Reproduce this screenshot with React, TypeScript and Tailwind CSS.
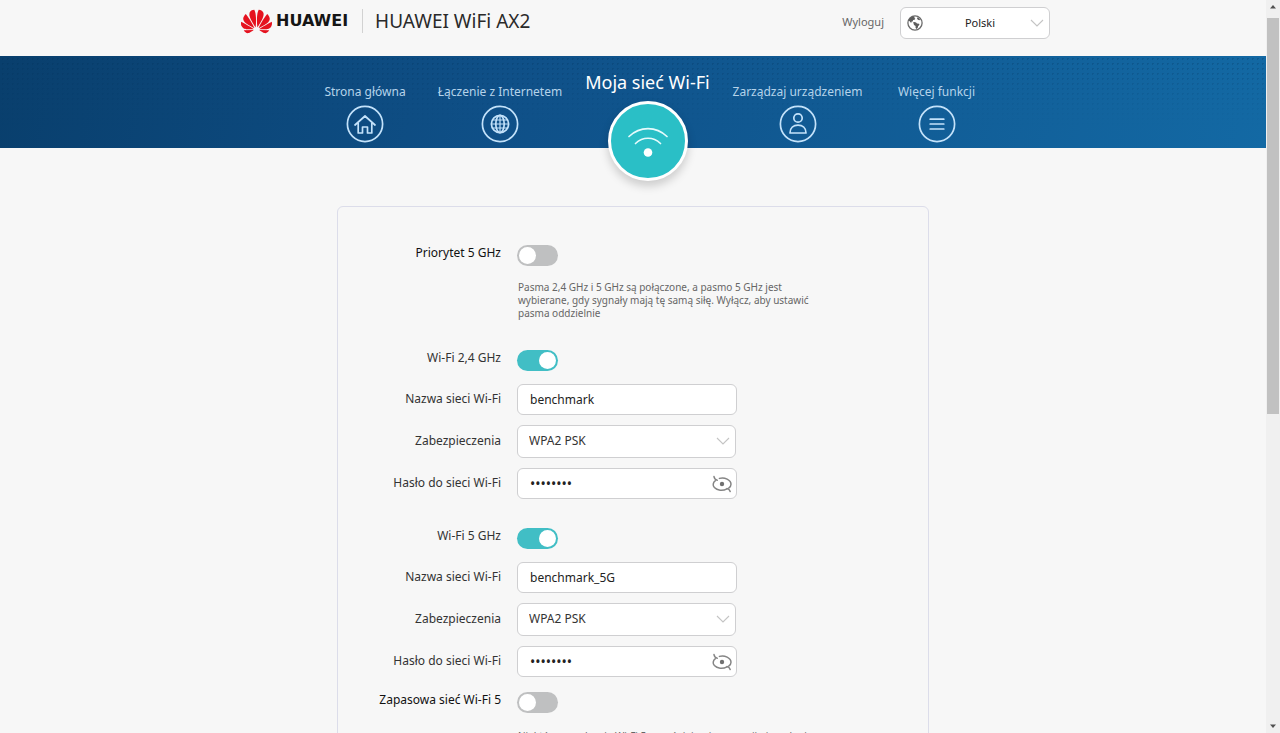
import { useState, type ReactNode } from "react";
import { SiHuawei } from "react-icons/si";

const FONT = "font-['Segoe_UI','Noto_Sans',sans-serif]";

function Chevron({ className }: { className: string }) {
  return (
    <svg viewBox="0 0 14 8" className={className} fill="none" stroke="#c4c4c4" strokeWidth="1.1" aria-hidden="true">
      <path d="M1 1l6 6 6-6" />
    </svg>
  );
}

function EarthIcon() {
  return (
    <svg viewBox="0 0 16 16" className="absolute left-[7px] top-[8px] size-4" aria-hidden="true">
      <circle cx="8" cy="8" r="7.1" fill="#fff" stroke="#6b6b6b" strokeWidth="1.3" />
      <path d="M1.4 5.6C2.2 3.2 4.2 1.6 6.6 1.2l1.2.7-.6 1.1 1.1.6-.7 1.2-1.5.3-.5 1.3-1.4.3.4 1.1-1-.2-.9-1.3z" fill="#5c5c5c" />
      <path d="M5.9 7.4l1.5-.5 1.7.5.9 1 2.1.3.3 1.1-1.3 1.4-.4 1.8-1.5 1-.7-1.6.1-1.5-1.6-1-.4-1.3z" fill="#5c5c5c" />
      <path d="M10.4 2.2l1.6 1 1.2 1.6-.9.5-1.4-.6-.9-1.2z" fill="#5c5c5c" />
    </svg>
  );
}

function Ring({ children }: { children: ReactNode }) {
  return (
    <svg
      viewBox="0 0 38 38"
      className="size-[38px]"
      fill="none"
      stroke="#c3e2fa"
      strokeWidth="1.7"
      strokeLinecap="round"
      strokeLinejoin="round"
      aria-hidden="true"
    >
      <circle cx="19" cy="19" r="17.6" />
      {children}
    </svg>
  );
}

function NavItem({ label, width, children }: { label: string; width: string; children: ReactNode }) {
  return (
    <a href="#" className={`flex shrink-0 flex-col items-center pt-[26px] ${width}`}>
      <span className="whitespace-nowrap text-[12px] leading-[20px] text-[#b5d3ea]">{label}</span>
      <span className="mt-[3px]">{children}</span>
    </a>
  );
}

function Row({ label, id, toggle, dark, children }: { label: string; id: string; toggle?: boolean; dark?: boolean; children: ReactNode }) {
  return (
    <div className={`flex items-center gap-4 ${toggle ? "h-9" : "h-[42px]"}`}>
      <label
        htmlFor={id}
        className={`w-[163px] shrink-0 whitespace-nowrap text-right text-[12px] leading-5 ${toggle ? "pb-1" : ""} ${dark ? "text-[#111]" : "text-[#333]"}`}
      >
        {label}
      </label>
      {children}
    </div>
  );
}

function Toggle({ id, initial }: { id: string; initial: boolean }) {
  const [on, setOn] = useState(initial);
  return (
    <input
      id={id}
      type="checkbox"
      role="switch"
      checked={on}
      onChange={(e) => setOn(e.target.checked)}
      className="flex h-[21px] w-[41px] shrink-0 cursor-pointer appearance-none items-center rounded-full bg-[#bfc0c1] px-[2px] before:size-[17px] before:rounded-full before:bg-white checked:justify-end checked:bg-[#41bec5]"
    />
  );
}

function TextRow({ id, value }: { id: string; value: string }) {
  return (
    <Row label="Nazwa sieci Wi-Fi" id={id}>
      <input
        id={id}
        type="text"
        defaultValue={value}
        className="h-[31px] w-[220px] rounded-[6px] border border-[#cfcfd1] bg-white px-3 text-[12px] text-[#222]"
      />
    </Row>
  );
}

function SecurityRow({ id }: { id: string }) {
  return (
    <Row label="Zabezpieczenia" id={id}>
      <div className="relative w-[219px]">
        <select
          id={id}
          className="block h-[33px] w-full appearance-none rounded-[6px] border border-[#cfcfd1] bg-white px-[11px] text-[12px] text-[#333]"
        >
          <option>WPA2 PSK</option>
          <option>WPA3 SAE</option>
        </select>
        <Chevron className="pointer-events-none absolute right-[6px] top-[12px] h-2 w-[14px]" />
      </div>
    </Row>
  );
}

function PasswordRow({ id }: { id: string }) {
  const [shown, setShown] = useState(false);
  return (
    <Row label="Hasło do sieci Wi-Fi" id={id}>
      <div className="relative w-[220px]">
        <input
          id={id}
          type={shown ? "text" : "password"}
          defaultValue="benchmrk"
          className="block h-[31px] w-full rounded-[6px] border border-[#cfcfd1] bg-white pl-3 pr-9 text-[14px] text-[#222]"
        />
        <button
          type="button"
          aria-label="Pokaż hasło"
          onClick={() => setShown(!shown)}
          className="absolute right-[5px] top-[7px] h-[18px] w-5"
        >
          <svg viewBox="0 0 20 18" className="h-[18px] w-5" fill="none" stroke="#858585" strokeWidth="1.5" strokeLinecap="round" aria-hidden="true">
            <path d="M2 1.6C2.300 3.400 3.300 4.700 5.200 5.200" />
            <path d="M7.400 3.400C12.500 1.800 19 4.800 19 9.200c0 1.700-.9 2.900-2.300 3.900" />
            <path d="M3.400 5.700C.8 7.600.5 10.400 2.400 12.600c2.700 2.900 8.300 3.600 12.600 1.200" />
            <path d="M15 13.600c1.600.3 2.700 1.300 3.200 2.900" />
            <circle cx="10" cy="9" r="2.200" fill="#707070" stroke="none" />
          </svg>
        </button>
      </div>
    </Row>
  );
}

function ScrollGutter() {
  return (
    <div className="flex w-[14px] shrink-0 flex-col items-center bg-[#f0f0f0]" aria-hidden="true">
      <svg viewBox="0 0 14 18" className="h-[18px] w-full shrink-0">
        <path d="M4 8.500L7 5l3 3.500z" fill="#505050" />
      </svg>
      <div className="h-[54%] w-3 bg-[#c1c1c1]" />
      <div className="flex-1" />
      <svg viewBox="0 0 14 18" className="h-[18px] w-full shrink-0">
        <path d="M4 9.500L7 13l3-3.500z" fill="#505050" />
      </svg>
    </div>
  );
}

export default function App() {
  return (
    <div className={`flex h-screen overflow-hidden bg-[#f7f7f7] ${FONT}`}>
      <div className="min-w-0 flex-1 overflow-hidden">
        <header className="mx-auto flex h-14 max-w-[834px] items-start pl-[25px]">
          <div className="flex h-[42px] items-center">
            <SiHuawei className="size-[31px] text-[#e5121f]" aria-hidden="true" />
            <span className="ml-1 font-['DejaVu_Sans',sans-serif] text-[16px] font-bold leading-5 text-[#151515]">HUAWEI</span>
            <span className="ml-[14px] h-6 w-px bg-[#d2d2d2]" />
            <h1 className="ml-3 whitespace-nowrap text-[19px] leading-6 text-[#2a2a2a]">HUAWEI WiFi AX2</h1>
          </div>
          <a href="#" className="ml-auto mt-[13px] text-[11px] leading-[18px] text-[#666]">
            Wyloguj
          </a>
          <div className="relative ml-4 mt-[7px] w-[150px]">
            <select
              aria-label="Język"
              className="block h-8 w-full appearance-none rounded-[6px] border border-[#cfcfd1] bg-white pl-[26px] pr-4 text-center text-[11px] text-[#222]"
            >
              <option>Polski</option>
              <option>English</option>
            </select>
            <EarthIcon />
            <Chevron className="pointer-events-none absolute right-[6px] top-[12px] h-2 w-[14px]" />
          </div>
        </header>

        <nav className="relative h-[92px] bg-linear-[100deg,#093f6d,#0f5088_40%,#1369a4]">
          <div className="absolute inset-0 bg-[radial-gradient(rgba(3,45,85,0.25)_1px,transparent_1px)] bg-[size:5px_5px] [mask-image:linear-gradient(to_bottom,black,transparent_75%)]" />
          <div className="relative mx-auto flex max-w-[834px] pl-[88px]">
            <NavItem label="Strona główna" width="w-[122px]">
              <Ring>
                <path d="M9 20l10-9 10 9M12.200 18v10h4.300v-6h5v6h4.300v-10" />
              </Ring>
            </NavItem>
            <NavItem label="Łączenie z Internetem" width="w-[148px]">
              <Ring>
                <circle cx="19" cy="19" r="8.600" />
                <ellipse cx="19" cy="19" rx="4.200" ry="8.600" />
                <path d="M19 10.400v17.200M11.500 15h15M11.500 23h15M10.400 19h17.200" strokeWidth="1.200" />
              </Ring>
            </NavItem>
            <a href="#" aria-current="page" className="flex w-[147px] shrink-0 flex-col items-center pt-[14px]">
              <span className="whitespace-nowrap text-[18px] leading-6 text-white">Moja sieć Wi-Fi</span>
              <span className="mt-[7px] flex size-20 items-center justify-center rounded-full border-[3px] border-white bg-[#2abfc6] shadow-[0_5px_10px_rgba(0,0,0,0.18)]">
                <svg viewBox="0 0 44 34" className="h-[34px] w-11" fill="none" stroke="#e6fbfc" strokeWidth="1.700" strokeLinecap="round" aria-hidden="true">
                  <path d="M3 12.500c11-10.500 27-10.500 38 0M9.500 19.500c7.300-7 17.700-7 25 0" />
                  <circle cx="22" cy="28.500" r="4.300" fill="#fff" stroke="none" />
                </svg>
              </span>
            </a>
            <NavItem label="Zarządzaj urządzeniem" width="w-[153px]">
              <Ring>
                <circle cx="19" cy="13" r="4.200" />
                <path d="M11 28c0-5 3.500-7.800 8-7.800s8 2.800 8 7.800z" />
              </Ring>
            </NavItem>
            <NavItem label="Więcej funkcji" width="w-[125px]">
              <Ring>
                <path d="M12.200 14.200h13.600M12.200 19h13.600M12.200 24h13.600" />
              </Ring>
            </NavItem>
          </div>
        </nav>

        <main className="mx-auto mt-[58px] max-w-[592px] rounded-[6px] border border-[#dcddea] pb-10 pt-[30px]">
          <Row label="Priorytet 5 GHz" id="priority" toggle dark>
            <Toggle id="priority" initial={false} />
          </Row>
          <p className="mb-[22px] ml-[180px] mt-2 w-[312px] text-[10px] leading-[13px] text-[#666]">
            Pasma 2,4 GHz i 5 GHz są połączone, a pasmo 5 GHz jest wybierane, gdy sygnały mają tę samą siłę. Wyłącz, aby ustawić pasma oddzielnie
          </p>
          <Row label="Wi-Fi 2,4 GHz" id="wifi24" toggle>
            <Toggle id="wifi24" initial />
          </Row>
          <TextRow id="name24" value="benchmark" />
          <SecurityRow id="security24" />
          <PasswordRow id="password24" />
          <div className="mt-4">
            <Row label="Wi-Fi 5 GHz" id="wifi5" toggle>
              <Toggle id="wifi5" initial />
            </Row>
            <TextRow id="name5" value="benchmark_5G" />
            <SecurityRow id="security5" />
            <PasswordRow id="password5" />
          </div>
          <div className="mt-[2px]">
            <Row label="Zapasowa sieć Wi-Fi 5" id="backup" toggle dark>
              <Toggle id="backup" initial={false} />
            </Row>
          </div>
          <p className="ml-[180px] mt-[10px] w-[312px] text-[10px] leading-[13px] text-[#666]">
            Niektóre urządzenia Wi-Fi 5 wcześniejszej generacji nie wykryją sieci Wi-Fi 6
          </p>
        </main>
      </div>
      <ScrollGutter />
    </div>
  );
}
